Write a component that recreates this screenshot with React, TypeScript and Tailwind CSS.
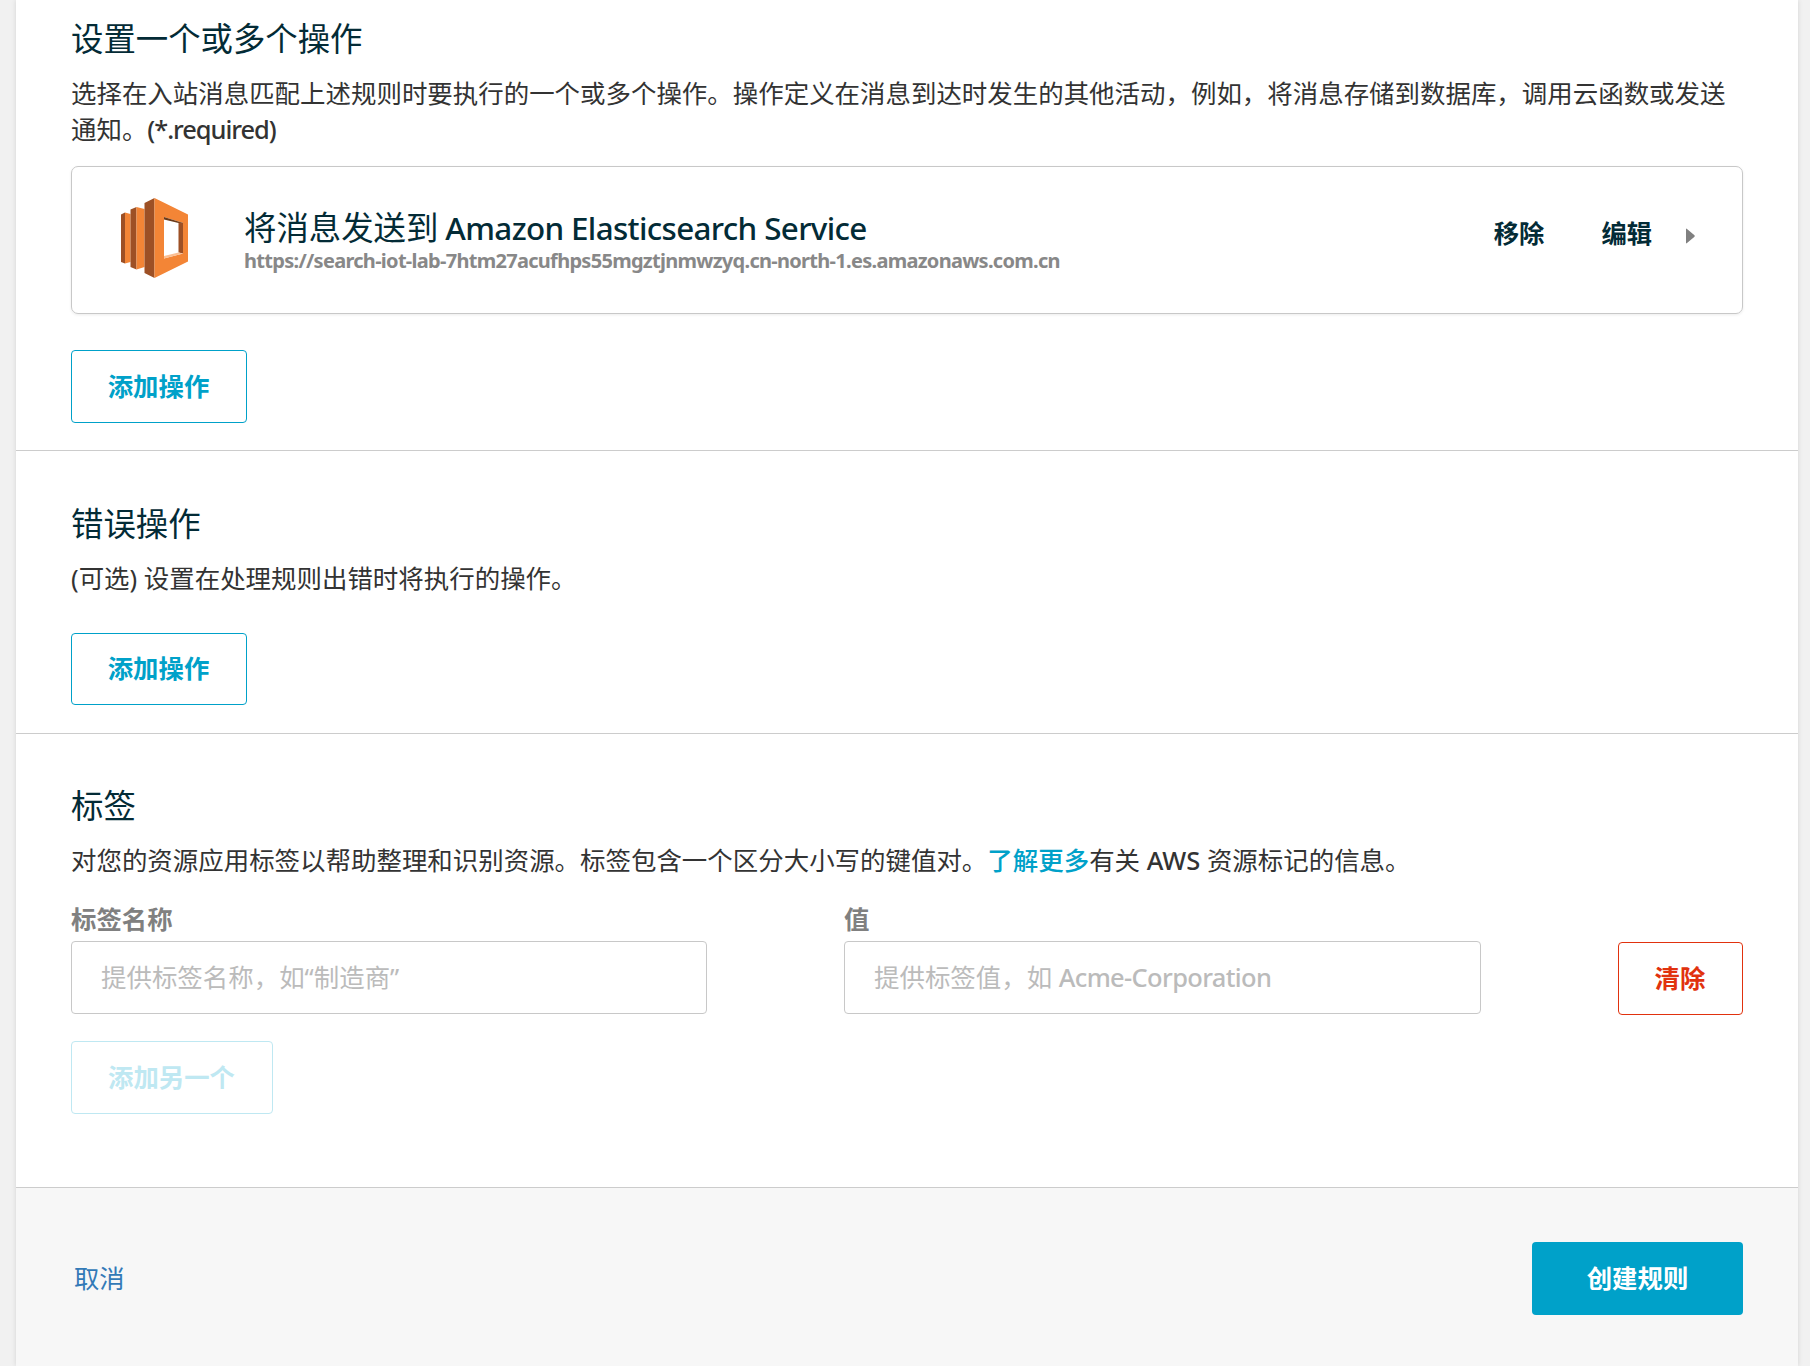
import type { ReactNode } from 'react';

function Heading({ children }: { children: ReactNode }) {
  return <h2 className="text-[32.4px] leading-[40px] text-[#032b36]">{children}</h2>;
}

function Body({ children }: { children: ReactNode }) {
  return <p className="mt-[17px] text-[25.46px] leading-9 text-[#333]">{children}</p>;
}

function OutlineButton({ children, className }: { children: ReactNode; className: string }) {
  return (
    <button
      className={`flex items-center justify-center rounded-[4px] border pr-px pb-[2px] text-[25.4px] leading-9 font-bold ${className}`}
    >
      {children}
    </button>
  );
}

function ElasticsearchIcon() {
  return (
    <svg width="67" height="80" viewBox="0 0 67 80" className="block">
      <path d="M0 16.500 4 14.500V65.500L0 64Z" fill="#9d5025" />
      <path d="M4 14.500 9.500 16V64L4 65.500Z" fill="#f38536" />
      <path d="M9.500 11.500 15.500 9V71.500L9.500 69Z" fill="#9d5025" />
      <path d="M15.500 9 23.500 11V69L15.500 71.500Z" fill="#f38536" />
      <path d="M23.500 5 33.500 0V80L23.500 75Z" fill="#9d5025" />
      <path
        fillRule="evenodd"
        d="M33.500 0 67 16.500V63.500L33.500 80ZM43 19V60.500L62 55.500V25Z"
        fill="#f38536"
      />
      <path d="M43 19 62 25H57.500L43 21.500Z" fill="#6b3a19" />
      <path d="M57.500 24.500 62 25V55.500L57.500 54.500Z" fill="#9d5025" />
      <path d="M43 58 57.500 54.500 62 55.500 43 60.500Z" fill="#fbbf93" />
    </svg>
  );
}

function ActionCard() {
  return (
    <div className="mt-[19px] flex h-[148px] rounded-[7px] border border-[#c8c8c8] pl-[49px] shadow-[0_1px_3px_rgba(0,0,0,0.08)]">
      <div className="w-[67px] pt-[31px]">
        <ElasticsearchIcon />
      </div>
      <div className="ml-[56px] flex-1 pt-[40px]">
        <div className="text-[32.4px] leading-[40px] whitespace-nowrap text-[#032b36]">
          将消息发送到
          <span className="ml-[7px] text-[31.4px] font-medium tracking-[-0.65px]">Amazon Elasticsearch Service</span>
        </div>
        <div className="text-[20px] leading-[26px] font-bold tracking-[-0.71px] whitespace-nowrap text-[#888]">
          https://search-iot-lab-7htm27acufhps55mgztjnmwzyq.cn-north-1.es.amazonaws.com.cn
        </div>
      </div>
      <div className="mt-[48px] flex h-9 items-center pr-[47px] text-[25.3px] leading-9 font-bold text-[#032b36]">
        <button>移除</button>
        <button className="ml-[57px]">编辑</button>
        <svg width="9" height="16" viewBox="0 0 9 16" className="mt-[5px] ml-[34px]">
          <path d="M0 1.200Q0 0 1 .9L8.500 7.300Q9 8 8.500 8.700L1 15.100Q0 16 0 14.800Z" fill="#808080" />
        </svg>
      </div>
    </div>
  );
}

function Field({ label, placeholder, className }: { label: string; placeholder: ReactNode; className: string }) {
  return (
    <div className={className}>
      <div className="text-[25.4px] leading-9 font-bold text-[#808080]">{label}</div>
      <div
        role="textbox"
        className="mt-1 h-[73px] rounded-[4px] border border-[#c8c8c8] px-[29px] text-[25.46px] leading-[71px] text-[#bbb]"
      >
        {placeholder}
      </div>
    </div>
  );
}

export default function App() {
  return (
    <div className="h-[1366px] w-[1810px] overflow-hidden bg-[#f1f1f1] pr-3 pl-4 font-['Noto_Sans','Noto_Sans_CJK_SC',sans-serif]">
      <main className="flex h-full flex-col bg-white shadow-[0_0_5px_rgba(0,0,0,0.12)]">
        <section className="h-[451px] border-b border-[#ccc] pt-[18px] pr-[55px] pl-[55px]">
          <Heading>设置一个或多个操作</Heading>
          <Body>
            选择在入站消息匹配上述规则时要执行的一个或多个操作。操作定义在消息到达时发生的其他活动，例如，将消息存储到数据库，调用云函数或发送
            <br />
            通知。<span className="font-medium tracking-[-1.05px]">(*.required)</span>
          </Body>
          <ActionCard />
          <OutlineButton className="mt-9 h-[73px] w-[176px] border-[#00a1c9] text-[#00a1c9]">添加操作</OutlineButton>
        </section>

        <section className="h-[283px] border-b border-[#ccc] px-[55px] pt-[52px]">
          <Heading>错误操作</Heading>
          <Body>(可选) 设置在处理规则出错时将执行的操作。</Body>
          <OutlineButton className="mt-[37px] h-[72px] w-[176px] border-[#00a1c9] text-[#00a1c9]">
            添加操作
          </OutlineButton>
        </section>

        <section className="h-[454px] border-b border-[#ccc] px-[55px] pt-[51px]">
          <Heading>标签</Heading>
          <Body>
            对您的资源应用标签以帮助整理和识别资源。标签包含一个区分大小写的键值对。
            <a className="font-medium text-[#00a1c9]">了解更多</a>有关 <span className="font-medium">AWS</span>{' '}
            资源标记的信息。
          </Body>
          <div className="mt-[23px] flex items-end">
            <Field label="标签名称" placeholder="提供标签名称，如“制造商”" className="w-[636px]" />
            <Field
              label="值"
              placeholder={
                <>
                  提供标签值，如 <span className="font-medium tracking-[-0.65px]">Acme-Corporation</span>
                </>
              }
              className="ml-[137px] w-[637px]"
            />
            <OutlineButton className="-mb-px ml-auto h-[73px] w-[125px] border-[#e1320e] text-[#e1320e]">
              清除
            </OutlineButton>
          </div>
          <OutlineButton className="mt-[27px] h-[73px] w-[202px] border-[#bfe8f2] text-[#bfe8f2]">
            添加另一个
          </OutlineButton>
        </section>

        <footer className="flex flex-1 items-start justify-between bg-[#f7f7f7] pt-[54px] pr-[55px] pl-[58px]">
          <a className="text-[25.3px] leading-[73px] text-[#337ab7]">取消</a>
          <button className="h-[73px] w-[211px] rounded-[4px] bg-[#00a1c9] pb-px text-[25.4px] leading-9 font-bold text-white">
            创建规则
          </button>
        </footer>
      </main>
    </div>
  );
}
